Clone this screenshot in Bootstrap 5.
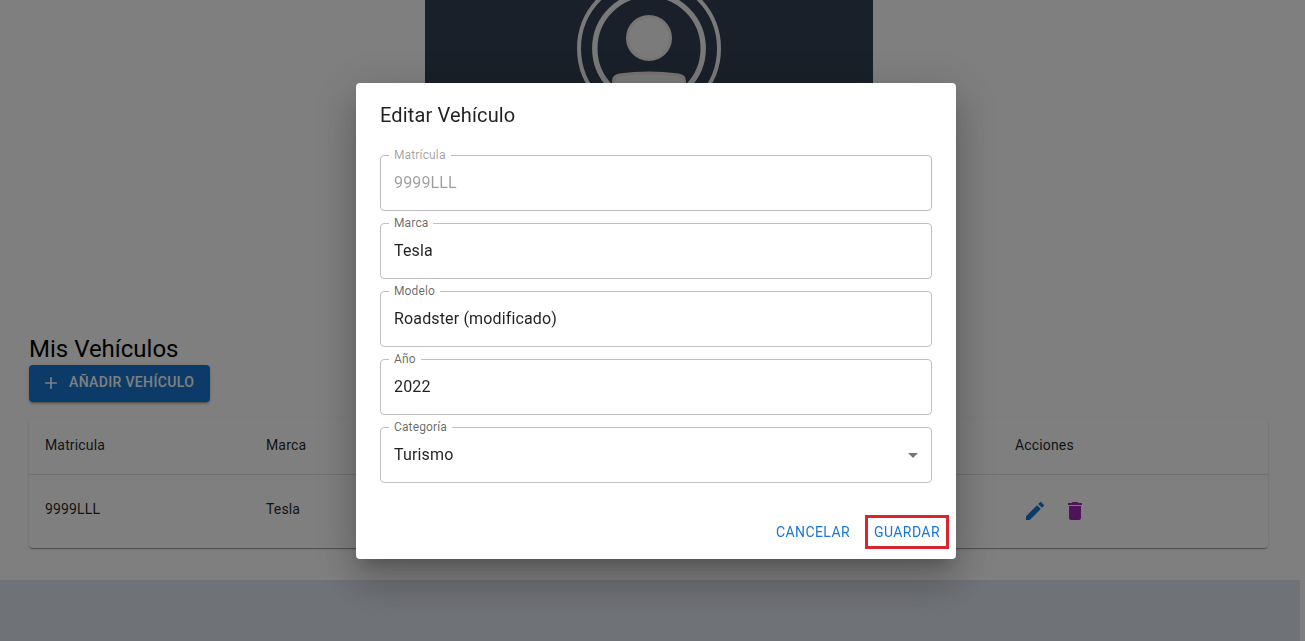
<!DOCTYPE html>
<html lang="es">
<head>
<meta charset="utf-8">
<meta name="viewport" content="width=device-width, initial-scale=1">
<title>Editar Vehículo</title>
<link href="https://cdn.jsdelivr.net/npm/bootstrap@5.3.0/dist/css/bootstrap.min.css" rel="stylesheet">
<style>
body{font-family:Roboto,"Liberation Sans",sans-serif;color:rgba(0,0,0,.87);background:#fff;height:641px;overflow:hidden;letter-spacing:.00938em}
.profile-space{height:337px;padding-left:425px}
.profile-cover{width:448px;height:190px;background:#344052}
.vehicles{width:1239px;margin-left:29px}
.vehicles h2{font-size:24px;line-height:24px;font-weight:400;color:#000;letter-spacing:0}
.btn-add{width:181px;height:37px;background:#1976d2;color:#fff;font-size:14px;font-weight:500;line-height:24px;letter-spacing:.35px;border-radius:4px;padding:0 12px 1px;box-shadow:0 3px 1px -2px rgba(0,0,0,.2),0 2px 2px rgba(0,0,0,.14),0 1px 5px rgba(0,0,0,.12)}
.btn-add span{padding-bottom:3px}
.table-paper{margin-top:15px;border-radius:4px;box-shadow:0 2px 1px -1px rgba(0,0,0,.2),0 1px 1px rgba(0,0,0,.14),0 1px 3px rgba(0,0,0,.12)}
.table-paper table{table-layout:fixed;font-size:14px;line-height:20px;letter-spacing:.15px;--bs-table-color:rgba(0,0,0,.87)}
.table-paper th{font-weight:400;height:57px;padding:0 16px 1px;vertical-align:middle;border-bottom:1px solid #e0e0e0}
.table-paper td{height:74px;padding:0 16px 5px;vertical-align:middle;border:0}
.table-paper td:last-child{padding-bottom:1px}
.icon-action{width:40px;height:40px}
.page-foot{height:61px;width:1300px;margin-top:32px;background:#dfe4ee}
.modal-backdrop{--bs-backdrop-opacity:.5}
.modal-dialog{width:600px;max-width:none;margin:83px 0 0 356px}
.modal-content{height:476px;border:0;border-radius:4px;box-shadow:0 11px 15px -7px rgba(0,0,0,.2),0 24px 38px 3px rgba(0,0,0,.14),0 9px 46px 8px rgba(0,0,0,.12)}
.modal-header{padding:16px 24px;height:64px}
.modal-title{font-size:20px;font-weight:400;line-height:32px;letter-spacing:.15px}
.modal-body{padding:8px 24px 0}
.outlined{height:56px;margin-bottom:12px}
.outlined label{left:9px;top:-8px;padding:0 5px;background:#fff;font-size:12px;line-height:16px;letter-spacing:.14px;color:rgba(0,0,0,.6)}
.outlined .form-control{height:56px;border:1px solid #c0c0c0;border-radius:4px;padding:0 13px 2px;font-size:16px;letter-spacing:.15px;color:rgba(0,0,0,.87);background:#fff}
.outlined .form-control:disabled{color:rgba(0,0,0,.38);border-color:#bdbdbd}
.outlined .form-control:disabled + label{color:rgba(0,0,0,.38)}
.caret{right:7px;top:16px}
.modal-footer{padding:0 7px 10px 0}
.btn-text{height:34px;font-size:14px;line-height:34px;letter-spacing:.4px;color:#1976d2;border:0;border-radius:0}
.btn-dismiss{margin-right:15px}
.btn-marked{width:84px;border:3px solid #d9252d;line-height:28px}
</style>
</head>
<body>
<main>
  <div class="profile-space">
    <div class="profile-cover">
      <svg width="448" height="190" viewBox="0 0 448 190" fill="none">
        <circle cx="224" cy="48.5" r="70" stroke="#f2f2f2" stroke-width="4"/>
        <circle cx="224" cy="48.5" r="54.2" stroke="#f2f2f2" stroke-width="5.4"/>
        <circle cx="224" cy="38" r="21.5" fill="#f7f7f7" stroke="#f2e8e8" stroke-width="3"/>
        <path d="M188.5 92v-11q0-5 6-6 29-4 59 0 6 1 6 6v11z" fill="#f7f7f7" stroke="#f2e4e4" stroke-width="3"/>
      </svg>
    </div>
  </div>
  <section class="vehicles">
    <h2 class="mb-1">Mis Vehículos</h2>
    <button class="btn btn-add border-0 d-flex align-items-center" type="button">
      <svg width="20" height="20" viewBox="0 0 24 24" fill="currentColor"><path d="M19 13h-6v6h-2v-6H5v-2h6V5h2v6h6z"/></svg>
      <span class="ms-2 text-nowrap">AÑADIR VEHÍCULO</span>
    </button>
    <div class="table-paper">
      <table class="table mb-0">
        <colgroup><col width="221"><col width="221"><col width="528"><col width="269"></colgroup>
        <thead><tr><th>Matricula</th><th>Marca</th><th></th><th>Acciones</th></tr></thead>
        <tbody><tr>
          <td>9999LLL</td><td>Tesla</td><td></td>
          <td><div class="d-flex">
            <span class="icon-action d-flex align-items-center justify-content-center"><svg width="24" height="24" viewBox="0 0 24 24" fill="#1976d2"><path d="M3 17.25V21h3.75L17.81 9.94l-3.75-3.75zM20.71 7.04c.39-.39.39-1.02 0-1.41l-2.34-2.34a.996.996 0 0 0-1.41 0l-1.83 1.83 3.75 3.75z"/></svg></span>
            <span class="icon-action d-flex align-items-center justify-content-center"><svg width="24" height="24" viewBox="0 0 24 24" fill="#9c27b0"><path d="M6 19c0 1.1.9 2 2 2h8c1.1 0 2-.9 2-2V7H6zM19 4h-3.5l-1-1h-5l-1 1H5v2h14z"/></svg></span>
          </div></td>
        </tr></tbody>
      </table>
    </div>
  </section>
  <footer class="page-foot"></footer>
</main>
<div class="modal-backdrop show"></div>
<div class="modal d-block" role="dialog">
  <div class="modal-dialog">
    <form class="modal-content">
      <div class="modal-header border-0"><h1 class="modal-title">Editar Vehículo</h1></div>
      <div class="modal-body">
        <div class="outlined position-relative"><input id="plate" class="form-control" value="9999LLL" disabled><label for="plate" class="position-absolute">Matrícula</label></div>
        <div class="outlined position-relative"><input id="brand" class="form-control" value="Tesla"><label for="brand" class="position-absolute">Marca</label></div>
        <div class="outlined position-relative"><input id="model" class="form-control" value="Roadster (modificado)"><label for="model" class="position-absolute">Modelo</label></div>
        <div class="outlined position-relative"><input id="year" class="form-control" value="2022"><label for="year" class="position-absolute">Año</label></div>
        <div class="outlined position-relative"><input id="category" class="form-control" value="Turismo" readonly><label for="category" class="position-absolute">Categoría</label>
          <svg class="caret position-absolute" width="24" height="24" viewBox="0 0 24 24" fill="#757575"><path d="m7 10 5 5 5-5z"/></svg></div>
      </div>
      <div class="modal-footer border-0 d-flex justify-content-end">
        <button class="btn btn-text btn-dismiss my-0 ms-0 p-0" type="button">CANCELAR</button>
        <button class="btn btn-text btn-marked m-0 p-0" type="button">GUARDAR</button>
      </div>
    </form>
  </div>
</div>
<script src="https://cdn.jsdelivr.net/npm/bootstrap@5.3.0/dist/js/bootstrap.bundle.min.js"></script>
</body>
</html>
